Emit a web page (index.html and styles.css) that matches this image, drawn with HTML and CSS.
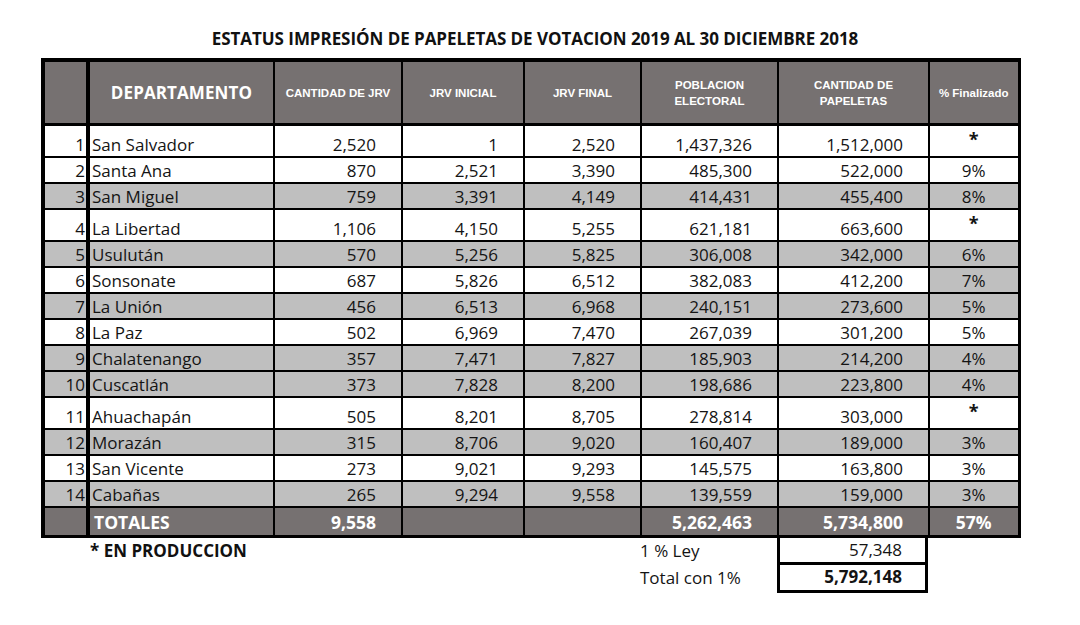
FILE: index.html
```html
<!DOCTYPE html>
<html lang="es">
<head>
<meta charset="utf-8">
<title>Estatus impresión de papeletas</title>
<link rel="stylesheet" href="styles.css">
</head>
<body>
<div class="sheet">
  <h1 class="title">ESTATUS IMPRESIÓN DE PAPELETAS DE VOTACION 2019 AL 30 DICIEMBRE 2018</h1>
  <table class="grid">
    <colgroup>
      <col class="c-num"><col class="c-dep"><col class="c-cant"><col class="c-ini"><col class="c-fin"><col class="c-pob"><col class="c-pap"><col class="c-pct">
    </colgroup>
    <thead>
      <tr>
        <th class="num"></th>
        <th class="h-dep">DEPARTAMENTO</th>
        <th class="h-small">CANTIDAD DE JRV</th>
        <th class="h-small">JRV INICIAL</th>
        <th class="h-small">JRV FINAL</th>
        <th class="h-small">POBLACION<br>ELECTORAL</th>
        <th class="h-small">CANTIDAD DE<br>PAPELETAS</th>
        <th class="h-small">% Finalizado</th>
      </tr>
    </thead>
    <tbody>
      <tr class="tall"><td class="num">1</td><td class="name">San Salvador</td><td>2,520</td><td>1</td><td>2,520</td><td>1,437,326</td><td>1,512,000</td><td class="pct star">*</td></tr>
      <tr><td class="num">2</td><td class="name">Santa Ana</td><td>870</td><td>2,521</td><td>3,390</td><td>485,300</td><td>522,000</td><td class="pct">9%</td></tr>
      <tr class="grey"><td class="num">3</td><td class="name">San Miguel</td><td>759</td><td>3,391</td><td>4,149</td><td>414,431</td><td>455,400</td><td class="pct">8%</td></tr>
      <tr class="tall"><td class="num">4</td><td class="name">La Libertad</td><td>1,106</td><td>4,150</td><td>5,255</td><td>621,181</td><td>663,600</td><td class="pct star">*</td></tr>
      <tr class="grey"><td class="num">5</td><td class="name">Usulután</td><td>570</td><td>5,256</td><td>5,825</td><td>306,008</td><td>342,000</td><td class="pct">6%</td></tr>
      <tr><td class="num">6</td><td class="name">Sonsonate</td><td>687</td><td>5,826</td><td>6,512</td><td>382,083</td><td>412,200</td><td class="pct shade">7%</td></tr>
      <tr class="grey"><td class="num">7</td><td class="name">La Unión</td><td>456</td><td>6,513</td><td>6,968</td><td>240,151</td><td>273,600</td><td class="pct">5%</td></tr>
      <tr><td class="num">8</td><td class="name">La Paz</td><td>502</td><td>6,969</td><td>7,470</td><td>267,039</td><td>301,200</td><td class="pct">5%</td></tr>
      <tr class="grey"><td class="num">9</td><td class="name">Chalatenango</td><td>357</td><td>7,471</td><td>7,827</td><td>185,903</td><td>214,200</td><td class="pct">4%</td></tr>
      <tr class="grey"><td class="num">10</td><td class="name">Cuscatlán</td><td>373</td><td>7,828</td><td>8,200</td><td>198,686</td><td>223,800</td><td class="pct">4%</td></tr>
      <tr class="tall"><td class="num">11</td><td class="name">Ahuachapán</td><td>505</td><td>8,201</td><td>8,705</td><td>278,814</td><td>303,000</td><td class="pct star">*</td></tr>
      <tr class="grey"><td class="num">12</td><td class="name">Morazán</td><td>315</td><td>8,706</td><td>9,020</td><td>160,407</td><td>189,000</td><td class="pct">3%</td></tr>
      <tr><td class="num">13</td><td class="name">San Vicente</td><td>273</td><td>9,021</td><td>9,293</td><td>145,575</td><td>163,800</td><td class="pct">3%</td></tr>
      <tr class="grey"><td class="num">14</td><td class="name">Cabañas</td><td>265</td><td>9,294</td><td>9,558</td><td>139,559</td><td>159,000</td><td class="pct">3%</td></tr>
    </tbody>
    <tfoot>
      <tr class="totals"><td class="num"></td><td class="name">TOTALES</td><td>9,558</td><td></td><td></td><td>5,262,463</td><td>5,734,800</td><td class="pct">57%</td></tr>
    </tfoot>
  </table>
  <div class="notes">
    <div class="note-prod">* EN PRODUCCION</div>
    <div class="note-label">1 % Ley</div>
    <div class="note-box note-box-top">57,348</div>
    <div class="note-label note-label-2">Total con 1%</div>
    <div class="note-box note-box-bottom">5,792,148</div>
  </div>
</div>
</body>
</html>
```

FILE: styles.css
```css
html, body {
  margin: 0;
  padding: 0;
  background: #ffffff;
}

body {
  font-family: "Open Sans", "Noto Sans", sans-serif;
  color: #141414;
}

.sheet {
  padding: 29px 0 0 41px;
  width: 980px;
}

.title {
  margin: 0 0 9px 0;
  padding-left: 8px;
  font-size: 17px;
  line-height: 20px;
  font-weight: 700;
  text-align: center;
  color: #111111;
  letter-spacing: -0.05px;
}

.grid {
  border-collapse: collapse;
  table-layout: fixed;
  width: 978px;
  border-top: 4px solid #000;
  border-left: 4px solid #000;
  border-right: 3px solid #000;
  border-bottom: 3px solid #000;
  font-size: 17px;
}

.c-num { width: 45px; }
.c-dep { width: 186px; }
.c-cant { width: 128px; }
.c-ini { width: 122px; }
.c-fin { width: 117px; }
.c-pob { width: 137px; }
.c-pap { width: 151px; }
.c-pct { width: 90px; }

.grid th,
.grid td {
  border: 2px solid #000;
  padding: 0;
}

.grid .num {
  border-right: 4px solid #000;
  text-align: right;
  padding-right: 1px;
}

.grid thead th {
  background: #767171;
  color: #ffffff;
  height: 61px;
  border-bottom: 3px solid #000;
  text-align: center;
  vertical-align: middle;
}

.h-dep {
  font-size: 17px;
  font-weight: 700;
  letter-spacing: 0.1px;
}

.h-small {
  font-family: "Liberation Sans", Arial, sans-serif;
  font-size: 11.5px;
  font-weight: 700;
  line-height: 16px;
}

.grid tbody td,
.grid tfoot td {
  height: 23px;
  line-height: 20px;
  vertical-align: bottom;
  text-align: right;
  padding-right: 25px;
  padding-bottom: 1px;
}

.grid tbody tr.tall td {
  height: 27px;
}

.grid tbody td.num,
.grid tfoot td.num {
  padding-right: 1px;
}

.grid td.name {
  text-align: left;
  padding-left: 2px;
  padding-right: 0;
}

.grid td.pct {
  text-align: center;
  padding-right: 0;
}

.grid tbody td.star {
  vertical-align: top;
  font-weight: 700;
  font-size: 18px;
  line-height: 20px;
  padding-top: 3px;
  padding-bottom: 0;
}

.grid tr.grey td,
.grid td.shade {
  background: #bfbfbf;
}

.grid tfoot tr.totals td {
  background: #767171;
  color: #ffffff;
  font-weight: 700;
  font-size: 17.5px;
  height: 25px;
  line-height: 22px;
  padding-bottom: 2px;
}

.grid tfoot tr.totals td.name {
  padding-left: 4px;
}

.notes {
  display: grid;
  grid-template-columns: 49px 550px 137px 151px;
  grid-template-rows: 27px 28px;
  font-size: 17px;
}

.note-prod {
  grid-column: 2;
  grid-row: 1;
  font-weight: 700;
  line-height: 26px;
  color: #111;
}

.note-label {
  grid-column: 3;
  grid-row: 1;
  line-height: 26px;
}

.note-label-2 {
  grid-row: 2;
}

.note-box {
  grid-column: 4;
  text-align: right;
  padding-right: 23px;
  border-left: 3px solid #000;
  border-right: 3px solid #000;
  line-height: 24px;
}

.note-box-top {
  grid-row: 1;
  border-bottom: 3px solid #000;
}

.note-box-bottom {
  grid-row: 2;
  border-bottom: 3px solid #000;
  font-weight: 700;
}
```
